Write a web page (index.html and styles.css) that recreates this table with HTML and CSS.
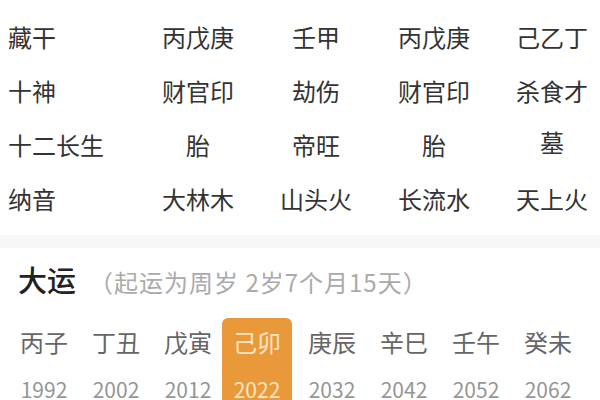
FILE: index.html
```html
<!DOCTYPE html>
<html lang="zh-CN">
<head>
<meta charset="utf-8">
<link rel="stylesheet" href="styles.css">
</head>
<body>
<div class="page">
  <section class="pillars">
    <div class="label">藏干</div><div class="val">丙戊庚</div><div class="val">壬甲</div><div class="val">丙戊庚</div><div class="val">己乙丁</div>
    <div class="label">十神</div><div class="val">财官印</div><div class="val">劫伤</div><div class="val">财官印</div><div class="val">杀食才</div>
    <div class="label">十二长生</div><div class="val">胎</div><div class="val">帝旺</div><div class="val">胎</div><div class="val up">墓</div>
    <div class="label">纳音</div><div class="val">大林木</div><div class="val">山头火</div><div class="val">长流水</div><div class="val">天上火</div>
  </section>
  <div class="band"></div>
  <section class="dayun">
    <div class="head">
      <span class="title">大运</span>
      <span class="sub">（起运为周岁 2岁7个月15天）</span>
    </div>
    <div class="list">
      <div class="item"><div class="gz">丙子</div><div class="yr">1992</div></div>
      <div class="item"><div class="gz">丁丑</div><div class="yr">2002</div></div>
      <div class="item"><div class="gz">戊寅</div><div class="yr">2012</div></div>
      <div class="item active"><div class="gz">己卯</div><div class="yr">2022</div></div>
      <div class="item"><div class="gz">庚辰</div><div class="yr">2032</div></div>
      <div class="item"><div class="gz">辛巳</div><div class="yr">2042</div></div>
      <div class="item"><div class="gz">壬午</div><div class="yr">2052</div></div>
      <div class="item"><div class="gz">癸未</div><div class="yr">2062</div></div>
    </div>
  </section>
</div>
</body>
</html>
```

FILE: styles.css
```css
html, body {
  margin: 0;
  padding: 0;
  background: #ffffff;
}
body {
  font-family: "Noto Sans CJK SC", "Noto Sans", sans-serif;
  width: 600px;
  height: 400px;
  overflow: hidden;
}
.page {
  width: 600px;
}
.pillars {
  display: grid;
  grid-template-columns: 139px repeat(4, 118px);
  grid-auto-rows: 54px;
  align-items: center;
  padding: 10px 0 9px;
  color: #333333;
  font-size: 24px;
  line-height: 30px;
  background: #ffffff;
}
.label {
  padding-left: 8px;
  white-space: nowrap;
}
.val {
  text-align: center;
  white-space: nowrap;
}
.val.up {
  position: relative;
  top: -3px;
}
.band {
  height: 13px;
  background: #f7f7f9;
}
.dayun {
  background: #ffffff;
  padding-top: 11px;
}
.head {
  display: flex;
  align-items: baseline;
  padding-left: 18px;
  height: 40px;
}
.title {
  font-size: 29px;
  line-height: 40px;
  color: #222222;
  font-weight: 500;
}
.sub {
  font-size: 24px;
  color: #aaaaaa;
  margin-left: 13px;
  letter-spacing: 1px;
  white-space: nowrap;
}
.list {
  display: flex;
  padding-left: 8px;
  margin-top: 19px;
}
.item {
  width: 72px;
  text-align: center;
  padding-top: 10px;
  height: 100px;
  box-sizing: border-box;
}
.gz {
  font-size: 24px;
  line-height: 28px;
  color: #666666;
}
.yr {
  font-size: 21px;
  line-height: 24px;
  margin-top: 21px;
  color: #959595;
}
.item.active {
  width: 70px;
  margin: 0 4px 0 -2px;
  background: #e9993a;
  border-radius: 6px;
}
.item.active .gz {
  color: #fde6c4;
}
.item.active .yr {
  color: #fde6c4;
}
```
